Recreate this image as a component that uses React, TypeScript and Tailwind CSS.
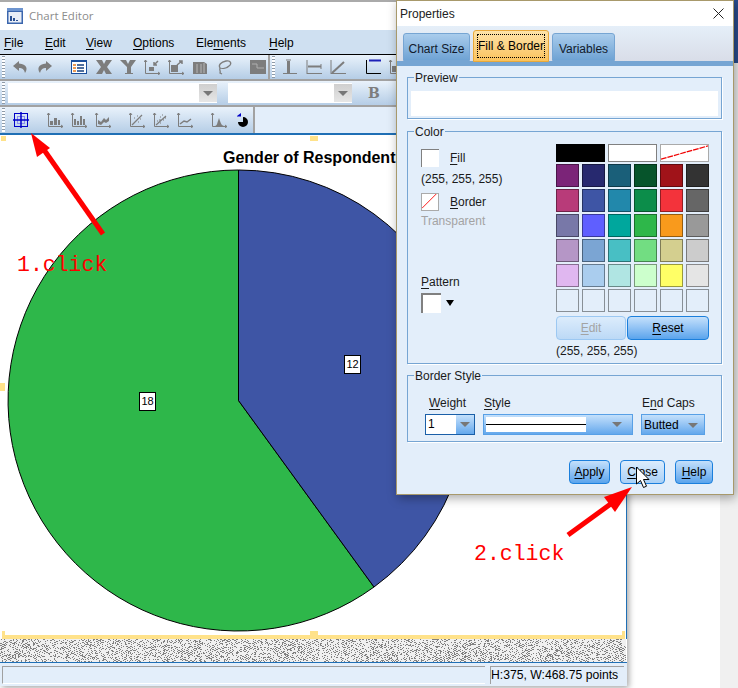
import type { ReactNode } from 'react';

const UI = "font-['Liberation_Sans',Arial,sans-serif]";

const PALETTE = [
  ['#7b2478', '#27296f', '#1a5f79', '#06542b', '#a01319', '#333333'],
  ['#b83b79', '#3e55a5', '#2288ab', '#0c8d4a', '#f3333b', '#666666'],
  ['#7878a8', '#5f5fff', '#00a79d', '#2eb74a', '#f99a1c', '#999999'],
  ['#b596c6', '#7ba5d3', '#48bfc4', '#72dd82', '#d4cf8f', '#cccccc'],
  ['#e0b7f0', '#aacdee', '#b0e5e3', '#ccffcc', '#ffff66', '#e5e5e5'],
  ['#e3eefa', '#e3eefa', '#e3eefa', '#e3eefa', '#e3eefa', '#e3eefa'],
];

// pseudo random dither for the empty area under the chart
const hatchPath = (() => {
  let seed = 7;
  let d = '';
  for (let y = 0; y < 23; y++) {
    for (let x = 0; x < 627; x++) {
      seed = (seed * 1103515245 + 12345) & 0x7fffffff;
      const diagonal = (x + y * 2) % 4 < 2;
      if ((seed >> 8) % 100 < (diagonal ? 46 : 7)) d += `M${x} ${y}h1v1h-1z`;
    }
  }
  return d;
})();

const Glyph = ({ w = 16, children }: { w?: number; children: ReactNode }) => (
  <svg width={w} height="16" viewBox={`0 0 ${w} 16`} className="shrink-0 block" fill="none" stroke="#7d7d7d">
    {children}
  </svg>
);

const Axes = () => <path d="M1.500 1v13.500H16M0 3l1.500-2L3 3M14 13l2 1.500-2 1.500" strokeWidth="1" />;

const Grip = () => (
  <div className="w-[3px] self-stretch my-[1px] bg-[repeating-linear-gradient(to_bottom,#8d9aa8_0,#8d9aa8_1px,#ffffff_1px,#ffffff_3px)]" />
);

const Arrow = () => <div className="w-0 h-0 border-x-[5px] border-x-transparent border-t-[5px] border-t-[#777777]" />;

const Under = ({ children }: { children: ReactNode }) => <span className="underline underline-offset-2">{children}</span>;

const ToolbarOne = () => (
  <div className="h-[26px] flex items-stretch border-b-2 border-[#a2a2a2] bg-gradient-to-b from-[#e9f2fb] to-[#b5cde6]">
    <div className="w-[270px] flex items-center border-r-2 border-[#a2a2a2] pl-[2px]">
      <Grip />
      <div className="flex items-center ml-[8px]">
        <Glyph w={15}>
          <path d="M6 2 0 7l6 5V9c3 0 5 1 6 5 3-4 2-9-6-9.500z" fill="#7d7d7d" stroke="none" />
        </Glyph>
        <div className="ml-[9px]">
          <Glyph w={15}>
            <path d="M9 2l6 5-6 5V9c-3 0-5 1-6 5-3-4-2-9 6-9.500z" fill="#7d7d7d" stroke="none" />
          </Glyph>
        </div>
        <div className="ml-[19px]">
          <Glyph>
            <rect x="0.500" y="1.500" width="15" height="13" fill="#ffffff" stroke="#1b4f9c" />
            <path d="M0 2h16" stroke="#1b4f9c" strokeWidth="2" />
            <path d="M2 6h3M2 9h3M2 12h3" stroke="#e8791a" strokeWidth="1.500" />
            <path d="M6 6h7M6 9h7M6 12h7" stroke="#16407f" strokeWidth="1.500" />
          </Glyph>
        </div>
        <div className="ml-[9px]">
          <Glyph>
            <path d="M0 1h6l2 4 2-4h6l-5 7 5 7h-6l-2-4-2 4H0l5-7z" fill="#7d7d7d" stroke="none" />
          </Glyph>
        </div>
        <div className="ml-[8px]">
          <Glyph>
            <path d="M0 1h6l2 4 2-4h6l-5 7v6h2v1H5v-1h2V8z" fill="#7d7d7d" stroke="none" />
          </Glyph>
        </div>
        <div className="ml-[8px]">
          <Glyph>
            <Axes />
            <rect x="5" y="8" width="5" height="4" fill="#7d7d7d" stroke="none" />
            <path d="M14 2l-4 4M10 3v3h3" strokeWidth="1.500" />
          </Glyph>
        </div>
        <div className="ml-[8px]">
          <Glyph>
            <Axes />
            <rect x="3" y="6" width="7" height="7" fill="#7d7d7d" stroke="none" />
            <path d="M9 6l5-4M11 2h3v3" strokeWidth="1.500" />
          </Glyph>
        </div>
        <div className="ml-[8px]">
          <Glyph>
            <path d="M1 3h11l3 2v10H1z" fill="#7d7d7d" stroke="none" />
            <path d="M5 5v9M9 5v9M12 4v10" stroke="#b7b7b7" />
          </Glyph>
        </div>
        <div className="ml-[9px]">
          <Glyph>
            <path d="M3 9c-2-3 1-6 6-7 5-1 6 3 3 5-2 2-6 3-9 2zM3 9c-1 2 1 3 0 5l2 1" strokeWidth="1.300" />
          </Glyph>
        </div>
        <div className="ml-[17px]">
          <Glyph>
            <rect x="0" y="1" width="16" height="14" fill="#7d7d7d" stroke="none" />
            <path d="M2 5h5v4h7" stroke="#b0b0b0" />
          </Glyph>
        </div>
      </div>
    </div>
    <div className="flex-1 flex items-center pl-[2px]">
      <Grip />
      <div className="flex items-center ml-[7px]">
        <Glyph>
          <path d="M1 14.500h14M4 1h5" strokeWidth="1" />
          <path d="M6.500 2v12" strokeWidth="3" />
        </Glyph>
        <div className="ml-[8px]">
          <Glyph>
            <path d="M1 1v14M1 14.500h15M15 5v5" strokeWidth="1" />
            <path d="M2 7.500h13" strokeWidth="2" />
          </Glyph>
        </div>
        <div className="ml-[8px]">
          <Glyph>
            <path d="M1 1v14M1 14.500h15" />
            <path d="M2 14 14 3" strokeWidth="2" />
          </Glyph>
        </div>
        <div className="ml-[19px]">
          <Glyph>
            <path d="M1.500 1v13.500H16" stroke="#000000" strokeWidth="1" />
            <path d="M4 1.500h12" stroke="#1d21b8" strokeWidth="2" />
          </Glyph>
        </div>
        <div className="ml-[8px]">
          <Glyph>
            <Axes />
            <rect x="3" y="7" width="6" height="6" fill="#7d7d7d" stroke="none" />
          </Glyph>
        </div>
      </div>
    </div>
  </div>
);

const ComboField = ({ w }: { w: string }) => (
  <div className={`${w} h-[20px] bg-white flex justify-end`}>
    <div className="w-[18px] h-[18px] mt-[1px] bg-gradient-to-b from-[#cfcfcf] to-[#e6e6e6] flex items-center justify-center">
      <Arrow />
    </div>
  </div>
);

const ToolbarTwo = () => (
  <div className="h-[26px] flex items-center border-b-2 border-[#a2a2a2] bg-gradient-to-b from-[#e9f2fb] to-[#b5cde6] pl-[2px]">
    <Grip />
    <div className="ml-[3px]">
      <ComboField w="w-[209px]" />
    </div>
    <div className="ml-[11px]">
      <ComboField w="w-[124px]" />
    </div>
    <span className="ml-[16px] font-['DejaVu_Serif',serif] font-bold text-[14px] text-[#7d7d7d]">B</span>
  </div>
);

const ToolbarThree = () => (
  <div className="h-[26px] flex bg-[#e3eefa]">
    <div className="w-[255px] flex items-center border-r-2 border-[#a2a2a2] bg-gradient-to-b from-[#e9f2fb] to-[#b5cde6] pl-[2px]">
      <Grip />
      <div className="flex items-center ml-[8px]">
        <Glyph>
          <g stroke="#0000c8">
            <rect x="1.500" y="1.500" width="13" height="13" />
            <rect x="4.500" y="4.500" width="7" height="7" stroke="#8c8cf0" />
            <path d="M0 8h16M8 0v16" strokeWidth="1.500" />
          </g>
        </Glyph>
        <div className="ml-[18px]">
          <Glyph>
            <Axes />
            <path d="M3 13V9h3v4zM7 13V6h3v7zM11 13V8h2v5z" fill="#7d7d7d" stroke="none" />
          </Glyph>
        </div>
        <div className="ml-[8px]">
          <Glyph>
            <Axes />
            <path d="M3 13V7h2v6zM6 13V9h2v4zM9 13V4h2v9zM12 13V7h2v6z" fill="#7d7d7d" stroke="none" />
          </Glyph>
        </div>
        <div className="ml-[8px]">
          <Glyph>
            <Axes />
            <path d="M3 12V8l3 2 3-4 2 2 3-3v4l-3 2-2-1-3 3z" fill="#7d7d7d" stroke="none" />
          </Glyph>
        </div>
        <div className="ml-[18px]">
          <Glyph>
            <Axes />
            <path d="M3 13l10-10" strokeWidth="1.200" />
            <path d="M5 6h1M8 4h1M11 7h1M9 10h1" strokeWidth="1" />
          </Glyph>
        </div>
        <div className="ml-[8px]">
          <Glyph>
            <Axes />
            <path d="M3 13l10-9M4 9h1M7 5h1M9 3h1M10 8h1M7 11h1M12 6h1M6 8h3" strokeWidth="1.200" />
          </Glyph>
        </div>
        <div className="ml-[8px]">
          <Glyph>
            <Axes />
            <path d="M3 12l4-3 3 1 4-3" strokeWidth="1.500" />
          </Glyph>
        </div>
        <div className="ml-[18px]">
          <Glyph>
            <Axes />
            <path d="M3 14c3 0 3-2 4-5l1-3 1 3c1 3 2 5 5 5z" fill="#7d7d7d" stroke="none" />
          </Glyph>
        </div>
        <div className="ml-[10px]">
          <svg width="12" height="14" viewBox="0 0 12 14" className="block">
            <path d="M6 4a5 5 0 1 1-5 5h5z" fill="#000000" />
            <path d="M0 3l4-3v3.500H0z" fill="#0000c8" />
          </svg>
        </div>
      </div>
    </div>
  </div>
);

const Handle = ({ className }: { className: string }) => <div className={`absolute bg-[#ffe28a] ${className}`} />;

const ChartCanvas = () => (
  <div className="relative h-[506px] bg-white border-t-2 border-[#1f6fb5] border-r border-r-[#1f6fb5]">
    <Handle className="left-[1px] top-[1px] w-[5px] h-[5px]" />
    <Handle className="left-[310px] top-[1px] w-[8px] h-[5px]" />
    <Handle className="left-0 top-[248px] w-[5px] h-[8px]" />
    <svg width="480" height="480" viewBox="0 0 480 480" className="absolute left-0 top-[30px]">
      <path d="M238.500 5A230.500 230.500 0 1 0 374 422L238.500 235.500z" fill="#2eb74a" stroke="#000000" />
      <path d="M238.500 5A230.500 230.500 0 0 1 374 422L238.500 235.500z" fill="#3e55a5" stroke="#000000" />
    </svg>
    <Handle className="left-[2px] bottom-0 w-[623px] h-[4px]" />
    <Handle className="left-[2px] bottom-0 w-[3px] h-[8px]" />
    <Handle className="left-[310px] bottom-0 w-[8px] h-[8px]" />
    <Handle className="right-[1px] bottom-0 w-[3px] h-[8px]" />
    <div className="absolute left-[223px] top-[13px] whitespace-nowrap font-bold text-[16px] leading-[20px] text-black">Gender of Respondent</div>
    <div className="absolute left-[344px] top-[220px] w-[17px] h-[19px] border border-black bg-white text-[11px] leading-[17px] text-center text-black">12</div>
    <div className="absolute left-[139px] top-[257px] w-[17px] h-[19px] border border-black bg-white text-[11px] leading-[17px] text-center text-black">18</div>
  </div>
);

const ChartEditor = () => (
  <div className={`${UI} w-[627px] h-[686px] flex flex-col shrink-0 border-t-2 border-[#aaaaaa] bg-white shadow-[2px_2px_6px_rgba(0,0,0,0.35)]`}>
    <div className="h-[28px] bg-white flex items-center pl-[7px] gap-[6px] font-['Open_Sans',sans-serif] text-[11.5px] text-[#8c8c8c]">
      <svg width="16" height="16" viewBox="0 0 16 16" className="block">
        <rect width="16" height="16" fill="#3b66ad" />
        <rect y="0" width="16" height="3" fill="#6d94cf" />
        <rect x="1.500" y="4" width="13" height="10.500" fill="#e9eef7" />
        <path d="M3 13V8h2v5zM6 13v-3h2v3zM9 13v-1h2v1z" fill="#294f92" />
      </svg>
      Chart Editor
    </div>
    <div className="h-[25px] bg-[#cfe0f1] flex items-center pl-[4px] pt-[2px] text-[12px] text-black border-b border-black">
      <span className="w-[41px]"><Under>F</Under>ile</span>
      <span className="w-[41px]"><Under>E</Under>dit</span>
      <span className="w-[47px]"><Under>V</Under>iew</span>
      <span className="w-[63px]"><Under>O</Under>ptions</span>
      <span className="w-[73px]">Ele<Under>m</Under>ents</span>
      <span><Under>H</Under>elp</span>
    </div>
    <ToolbarOne />
    <ToolbarTwo />
    <ToolbarThree />
    <ChartCanvas />
    <svg width="626" height="23" viewBox="0 0 626 23" className="block shrink-0 bg-[#f0f0f0]">
      <path d={hatchPath} fill="#808080" />
    </svg>
    <div className="flex-1 bg-[#e3eefa] border-t border-[#1f6fb5] flex gap-[5px] px-[2px] pt-[3px] pb-[2px] text-[12.200px] leading-[16px] text-black">
      <div className="w-[483px] border-t border-l border-[#a0a0a0] border-b-white border-b" />
      <div className="w-[134px] border-t border-l border-[#a0a0a0] whitespace-nowrap">H:375, W:468.75 points</div>
    </div>
  </div>
);

const Group = ({ title, className, children }: { title: string; className: string; children?: ReactNode }) => (
  <div className={`relative border border-[#76a5d3] shadow-[1px_1px_0_#ffffff] ${className}`}>
    <div className="absolute left-[6px] -top-[8px] bg-[#e3eefa] pl-[1px] pr-[1px] text-[12px] leading-[16px] text-[#1a1a1a]">{title}</div>
    {children}
  </div>
);

const Swatch = ({ color }: { color: string }) => (
  <div
    className="h-[23px] border border-black/40"
    style={{ backgroundColor: color }}
  />
);

const Tab = ({ children, active, w }: { children: ReactNode; active?: boolean; w: string }) =>
  active ? (
    <div className={`${w} h-[32px] -mb-[1px] rounded-t-[3px] border border-[#e8a83a] bg-gradient-to-b from-[#fde3a8] to-[#fbc35c] p-[3px] text-[12px] text-black`}>
      <div className="h-[24px] border border-dotted border-black flex items-center justify-center whitespace-nowrap">{children}</div>
    </div>
  ) : (
    <div className={`${w} h-[28px] rounded-t-[3px] border border-[#76a5d3] bg-gradient-to-b from-[#a9ccec] to-[#6fa3d4] flex items-center justify-center text-[12px] text-[#111a2b] whitespace-nowrap pt-[3px]`}>
      {children}
    </div>
  );

const BlueButton = ({ children, className }: { children: ReactNode; className: string }) => (
  <div
    className={`h-[24px] rounded-[4px] border flex items-center justify-center text-[12px] bg-gradient-to-b ${className}`}
  >
    {children}
  </div>
);

const ACTIVE_BUTTON = 'border-[#1b7fdc] from-[#c4e0fb] to-[#5aa4ec] text-black';

const FillColumn = () => (
  <div className="w-[134px] pl-[13px] pt-[17px] text-[12px] leading-[16px] text-[#1a1a1a]">
    <div className="flex items-center">
      <div className="w-[18px] h-[18px] bg-white border-t border-l border-[#808080]" />
      <span className="ml-[11px]"><Under>F</Under>ill</span>
    </div>
    <div className="mt-[4px]">(255, 255, 255)</div>
    <div className="flex items-center mt-[6px]">
      <svg width="18" height="18" viewBox="0 0 18 18" className="block bg-white border border-[#aaaaaa]">
        <path d="M0 16 16 0" stroke="#ff0000" />
      </svg>
      <span className="ml-[11px]"><Under>B</Under>order</span>
    </div>
    <div className="mt-[2px] text-[#a3a3a3]">Transparent</div>
    <div className="mt-[45px]"><Under>P</Under>attern</div>
    <div className="flex items-center mt-[3px]">
      <div className="w-[20px] h-[20px] bg-white border-t-2 border-l-2 border-[#808080]" />
      <div className="ml-[5px] w-0 h-0 border-x-[4px] border-x-transparent border-t-[6px] border-t-black" />
    </div>
  </div>
);

const PaletteColumn = () => (
  <div className="w-[153px] mt-[12px] ml-[14px] flex flex-col gap-[2px]">
    <div className="grid grid-cols-3 gap-[3px] h-[18px]">
      <div className="bg-black" />
      <div className="bg-white border border-[#808080]" />
      <svg viewBox="0 0 49 18" preserveAspectRatio="none" className="block w-full h-full bg-white border border-[#aaaaaa]">
        <path d="M0 16 49 1" stroke="#f00000" strokeWidth="1.400" strokeDasharray="6 1" />
      </svg>
    </div>
    <div className="grid grid-cols-6 gap-[3px] gap-y-[2px]">
      {PALETTE.flat().map((c, i) => <Swatch key={i} color={c} />)}
    </div>
    <div className="flex gap-[1px] mt-[2px]">
      <BlueButton className="w-[70px] border-[#9cc8f2] from-[#dcecfc] to-[#bcd9f6] text-[#a3a3a3]"><Under>E</Under>dit</BlueButton>
      <BlueButton className={`flex-1 ${ACTIVE_BUTTON}`}><Under>R</Under>eset</BlueButton>
    </div>
    <div className="text-[12px] leading-[16px] text-[#1a1a1a] mt-[1px]">(255, 255, 255)</div>
  </div>
);

const BorderStyle = () => (
  <div className="flex pl-[17px] pt-[19px] text-[12px] leading-[16px] text-[#1a1a1a]">
    <div className="w-[58px]">
      <div className="pl-[4px]"><Under>W</Under>eight</div>
      <div className="mt-[3px] w-[50px] h-[21px] border border-[#1a5fa8] bg-gradient-to-b from-[#c4e0fb] to-[#64a8ec] flex">
        <div className="w-[30px] bg-white pl-[2px] pt-[1px] text-black">1</div>
        <div className="flex-1 flex items-center justify-center"><Arrow /></div>
      </div>
    </div>
    <div className="w-[158px]">
      <div className="pl-[1px]"><Under>S</Under>tyle</div>
      <div className="mt-[3px] w-[150px] h-[21px] border border-[#58a0e6] bg-gradient-to-b from-[#c4e0fb] to-[#64a8ec] flex items-center">
        <div className="ml-[2px] w-[100px] h-[15px] bg-white flex items-center"><div className="w-full border-t border-black" /></div>
        <div className="ml-auto mr-[10px]"><Arrow /></div>
      </div>
    </div>
    <div className="w-[64px]">
      <div className="pl-[1px] whitespace-nowrap">E<Under>n</Under>d Caps</div>
      <div className="mt-[3px] w-[64px] h-[21px] border border-[#58a0e6] bg-gradient-to-b from-[#c4e0fb] to-[#64a8ec] flex items-center pl-[2px] pt-[1px] text-black">
        Butted
        <div className="ml-auto mr-[6px]"><Arrow /></div>
      </div>
    </div>
  </div>
);

const Properties = () => (
  <div className={`${UI} absolute left-[396px] top-0 w-[338px] h-[495px] border border-[#a8996b] bg-[#e3eefa] shadow-[2px_3px_10px_rgba(0,0,0,0.35)] flex flex-col`}>
    <div className="h-[25px] bg-white flex items-center justify-between pl-[3px] pr-[9px] text-[12px] text-[#222222]">
      Properties
      <svg width="11" height="11" viewBox="0 0 11 11" className="block" stroke="#222222" fill="none">
        <path d="M0.500 0.500l10 10M10.500 0.500l-10 10" />
      </svg>
    </div>
    <div className="h-[35px] bg-gradient-to-b from-[#e5eff9] to-[#d9dde8] flex items-end gap-[3px] pl-[6px] relative z-10">
      <Tab w="w-[67px]">Chart Size</Tab>
      <Tab active w="w-[76px]">Fill &amp; Border</Tab>
      <Tab w="w-[63px]">Variables</Tab>
    </div>
    <div className="h-[5px] bg-[#76a5d3]" />
    <div className="flex-1 pl-[10px] pt-[11px] flex flex-col">
      <Group title="Preview" className="w-[315px] h-[42px] pl-[3px] pr-[3px] pt-[13px]">
        <div className="h-[25px] bg-white" />
      </Group>
      <Group title="Color" className="w-[315px] h-[233px] mt-[12px] flex">
        <FillColumn />
        <PaletteColumn />
      </Group>
      <Group title="Border Style" className="w-[315px] h-[67px] mt-[11px]">
        <BorderStyle />
      </Group>
      <div className="flex justify-end gap-[10px] w-[306px] mt-[18px]">
        <BlueButton className={`w-[41px] ${ACTIVE_BUTTON}`}><Under>A</Under>pply</BlueButton>
        <BlueButton className="w-[45px] border-[#1b7fdc] from-[#dcedfd] to-[#a9d0f6] text-black"><Under>C</Under>lose</BlueButton>
        <BlueButton className={`w-[38px] ${ACTIVE_BUTTON}`}><Under>H</Under>elp</BlueButton>
      </div>
    </div>
  </div>
);

const Annotations = () => (
  <>
    <svg width="738" height="688" viewBox="0 0 738 688" className="absolute inset-0 pointer-events-none">
      <path d="M103 234 42 147" stroke="#ff0000" strokeWidth="5" />
      <path d="M31 133 50 148 37 157z" fill="#ff0000" />
      <path d="M568 535 612 503" stroke="#ff0000" strokeWidth="5" />
      <path d="M632 487 615 512 604 497z" fill="#ff0000" />
      <path d="M636.500 467v17l4-3.500 3 7 3-1.300-3-6.700h5.500z" fill="#ffffff" stroke="#000000" />
    </svg>
    <div className="absolute left-[17px] top-[252px] font-['Liberation_Mono',monospace] text-[21.500px] leading-[26px] text-[#ff0000]">1.click</div>
    <div className="absolute left-[474px] top-[541px] font-['Liberation_Mono',monospace] text-[21.500px] leading-[26px] text-[#ff0000]">2.click</div>
  </>
);

const App = () => (
  <div className="relative w-[738px] h-[688px] overflow-hidden bg-white flex">
    <ChartEditor />
    <div className="flex-1 flex justify-end">
      <div className="w-[18px] bg-[#f0f0f0] flex justify-end">
        <div className="w-[4px] h-[63px] bg-[#2a4d8f]" />
      </div>
    </div>
    <Properties />
    <Annotations />
  </div>
);

export default App;
